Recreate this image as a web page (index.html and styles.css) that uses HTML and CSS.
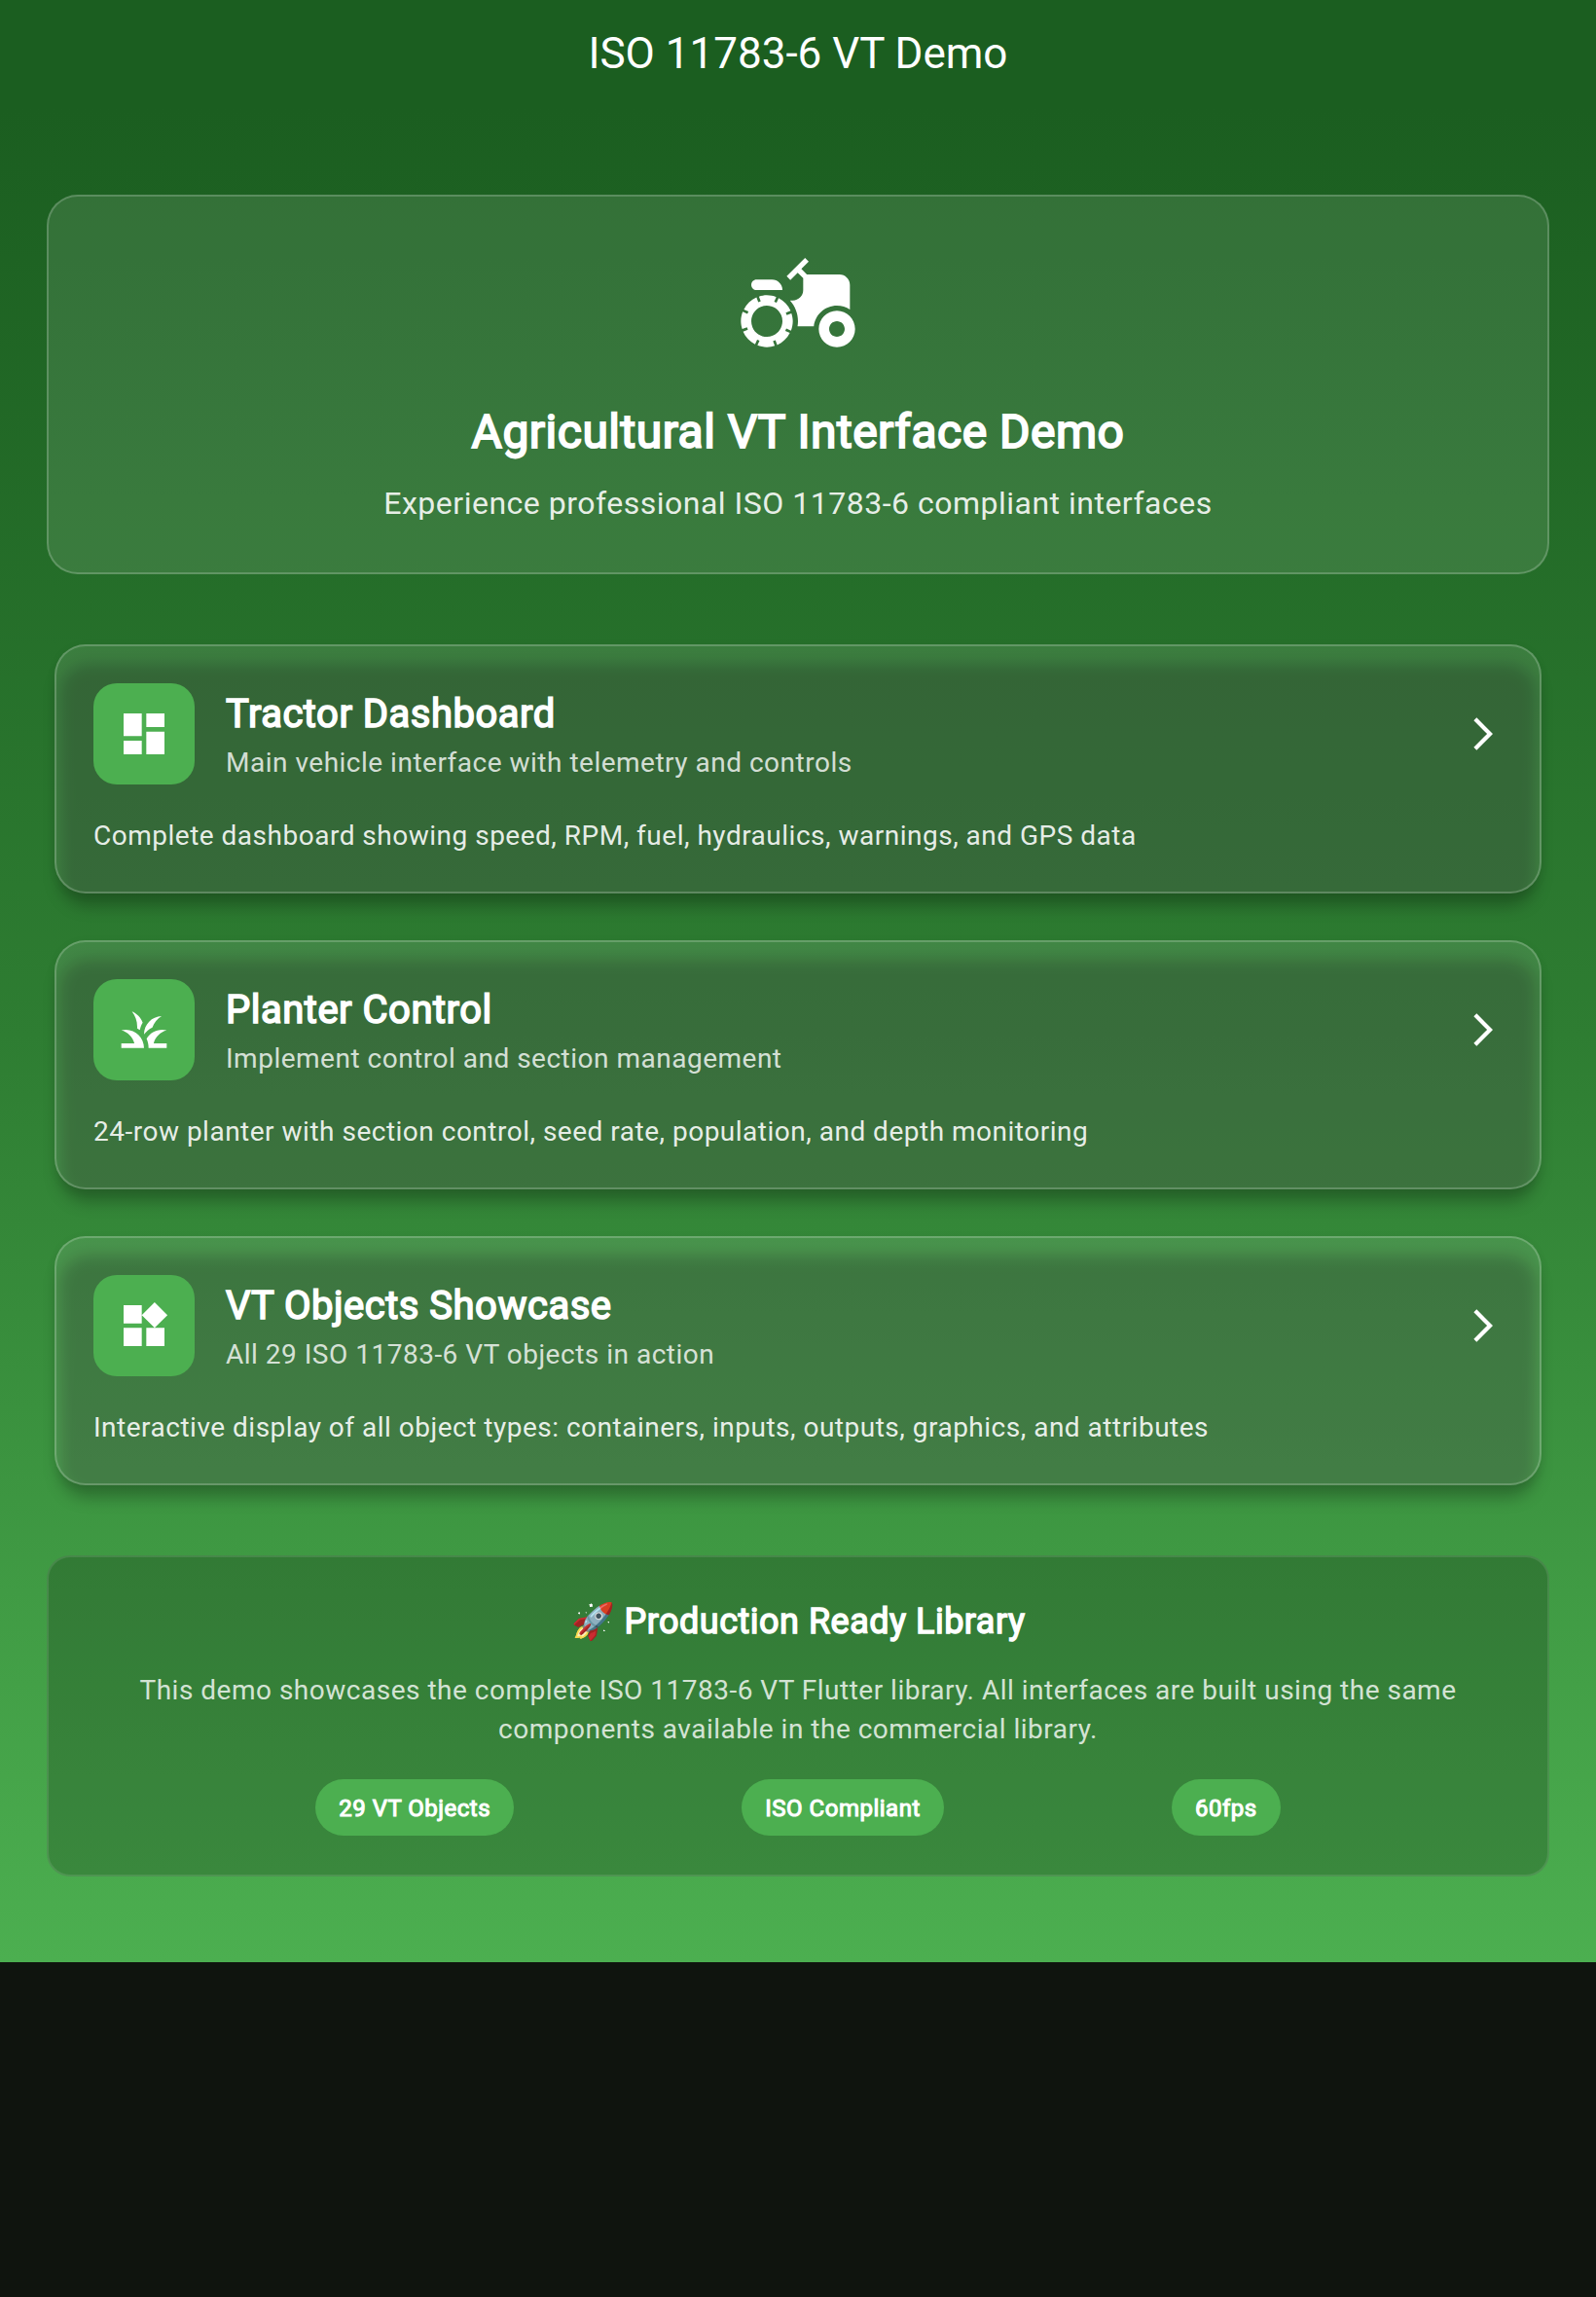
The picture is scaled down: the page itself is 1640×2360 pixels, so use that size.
FILE: index.html
```
<!DOCTYPE html>
<html lang="en">
<head>
<meta charset="utf-8">
<title>ISO 11783-6 VT Demo</title>
<link rel="stylesheet" href="styles.css">
</head>
<body>
<header class="app-bar"><h1 class="app-title">ISO 11783-6 VT Demo</h1></header>
<main class="content">
  <section class="hero">
    <svg class="hero-icon" viewBox="0 0 24 24" aria-hidden="true"><path d="M19.5,12c0.93,0,1.78,0.28,2.5,0.76V8c0-1.1-0.9-2-2-2h-6.29l-1.06-1.06l1.41-1.41l-0.71-0.71L9.82,6.35l0.71,0.71l1.41-1.41L13,6.71V9c0,1.1-0.9,2-2,2h-0.54c0.95,1.06,1.54,2.46,1.54,4c0,0.34-0.04,0.67-0.09,1h3.14C15.3,13.75,17.19,12,19.5,12z"/><path d="M19.5,13c-1.93,0-3.5,1.57-3.5,3.5s1.57,3.5,3.5,3.5s3.5-1.57,3.5-3.5S21.43,13,19.5,13z M19.5,18c-0.83,0-1.5-0.67-1.5-1.5s0.67-1.5,1.5-1.5s1.5,0.67,1.5,1.5S20.33,18,19.5,18z"/><path d="M4,9h5c0-1.1-0.9-2-2-2H4C3.45,7,3,7.45,3,8C3,8.55,3.45,9,4,9z"/><path d="M9.83,13.82l-0.18-0.47L10.58,13c-0.46-1.06-1.28-1.91-2.31-2.43l-0.4,0.89l-0.46-0.21l0.4-0.9C7.26,10.13,6.64,10,6,10c-0.53,0-1.04,0.11-1.52,0.26l0.34,0.91l-0.47,0.18L4,10.42c-1.06,0.46-1.91,1.28-2.43,2.31l0.89,0.4l-0.21,0.46l-0.9-0.4C1.13,13.74,1,14.36,1,15c0,0.53,0.11,1.04,0.26,1.52l0.91-0.34l0.18,0.47L1.42,17c0.46,1.06,1.28,1.91,2.31,2.43l0.4-0.89l0.46,0.21l-0.4,0.9C4.74,19.87,5.36,20,6,20c0.53,0,1.04-0.11,1.52-0.26l-0.34-0.91l0.47-0.18L8,19.58c1.06-0.46,1.91-1.28,2.43-2.31l-0.89-0.4l0.21-0.46l0.9,0.4C10.87,16.26,11,15.64,11,15c0-0.53-0.11-1.04-0.26-1.52L9.83,13.82z M7.15,17.77c-1.53,0.63-3.29-0.09-3.92-1.62c-0.63-1.53,0.09-3.29,1.62-3.92c1.53-0.63,3.29,0.09,3.92,1.62C9.41,15.38,8.68,17.14,7.15,17.77z"/></svg>
    <h2 class="hero-title">Agricultural VT Interface Demo</h2>
    <p class="hero-subtitle">Experience professional ISO 11783-6 compliant interfaces</p>
  </section>

  <section class="demos">
    <article class="card">
      <div class="card-head">
        <div class="tile"><svg viewBox="0 0 24 24" aria-hidden="true"><path d="M3 13h8V3H3v10zm0 8h8v-6H3v6zm10 0h8V11h-8v10zm0-18v6h8V3h-8z"/></svg></div>
        <div class="card-text"><h3 class="card-title">Tractor Dashboard</h3><p class="card-subtitle">Main vehicle interface with telemetry and controls</p></div>
        <svg class="chevron" viewBox="0 0 24 24" aria-hidden="true"><path d="M6.23 20.23 8 22l10-10L8 2 6.23 3.77 14.46 12z"/></svg>
      </div>
      <p class="card-desc">Complete dashboard showing speed, RPM, fuel, hydraulics, warnings, and GPS data</p>
    </article>
    <article class="card">
      <div class="card-head">
        <div class="tile"><svg viewBox="0 0 24 24" aria-hidden="true"><path d="M12 20H2v-2h5.75C7.02 15.19 4.81 12.99 2 12.26 2.64 12.1 3.31 12 4 12c4.42 0 8 3.58 8 8zM22 12.26C21.36 12.1 20.69 12 20 12c-2.93 0-5.48 1.58-6.88 3.93.29.66.53 1.35.67 2.07.13.65.2 1.32.2 2h8v-2h-5.75c.74-2.81 2.95-5.01 5.76-5.74zM15.64 11.02c.78-2.09 2.23-3.84 4.09-5C15.44 6.16 12 9.67 12 14v.02c.95-1.27 2.2-2.3 3.64-3zM11.42 8.85C10.58 6.66 8.88 4.89 6.7 4 8.14 5.86 9 8.18 9 10.71c0 .21-.03.41-.04.61.43.24.83.52 1.22.82.15-1.18.59-2.3 1.24-3.29z"/></svg></div>
        <div class="card-text"><h3 class="card-title">Planter Control</h3><p class="card-subtitle">Implement control and section management</p></div>
        <svg class="chevron" viewBox="0 0 24 24" aria-hidden="true"><path d="M6.23 20.23 8 22l10-10L8 2 6.23 3.77 14.46 12z"/></svg>
      </div>
      <p class="card-desc">24-row planter with section control, seed rate, population, and depth monitoring</p>
    </article>
    <article class="card">
      <div class="card-head">
        <div class="tile"><svg viewBox="0 0 24 24" aria-hidden="true"><path d="M13 13v8h8v-8h-8zM3 21h8v-8H3v8zM3 3v8h8V3H3zm13.66-1.31L11 7.34 16.66 13l5.66-5.66-5.66-5.65z"/></svg></div>
        <div class="card-text"><h3 class="card-title">VT Objects Showcase</h3><p class="card-subtitle">All 29 ISO 11783-6 VT objects in action</p></div>
        <svg class="chevron" viewBox="0 0 24 24" aria-hidden="true"><path d="M6.23 20.23 8 22l10-10L8 2 6.23 3.77 14.46 12z"/></svg>
      </div>
      <p class="card-desc">Interactive display of all object types: containers, inputs, outputs, graphics, and attributes</p>
    </article>
  </section>

  <section class="footer-panel">
    <h2 class="footer-title">🚀 Production Ready Library</h2>
    <p class="footer-text">This demo showcases the complete ISO 11783-6 VT Flutter library. All interfaces are built using the same components available in the commercial library.</p>
    <div class="chips"><span class="chip">29 VT Objects</span><span class="chip">ISO Compliant</span><span class="chip">60fps</span></div>
  </section>
</main>
</body>
</html>
```
FILE: styles.css
```
* { box-sizing: border-box; margin: 0; }

body {
  min-height: 2360px;
  background: #0f140e;
  color: #fff;
  font-family: Roboto, "Noto Sans", sans-serif;
  font-weight: 400;
}

h1, h2, h3 { font-weight: 400; }
svg { display: block; flex-shrink: 0; fill: #fff; }

.app-bar {
  height: 112px;
  display: flex;
  justify-content: center;
  background: #1b5e20;
}
.app-title { padding-top: 29px; font-size: 44px; line-height: 52px; }

.content {
  height: 1904px;
  padding: 88px 48px 0;
  background: linear-gradient(#1b5e20, #2e7d32 50%, #4caf50);
}

.hero {
  height: 390px;
  padding: 48px 48px 0;
  display: flex;
  flex-direction: column;
  align-items: center;
  border: 2px solid rgba(255, 255, 255, .2);
  border-radius: 32px;
  background: rgba(255, 255, 255, .1);
}
.hero-icon { width: 128px; height: 128px; }
.hero-title {
  margin-top: 34px;
  font-size: 48px;
  line-height: 64px;
  letter-spacing: .5px;
  -webkit-text-stroke: .04em #fff;
}
.hero-subtitle {
  margin-top: 17px;
  font-size: 32px;
  line-height: 48px;
  letter-spacing: .5px;
  color: rgba(255, 255, 255, .9);
}

.demos {
  isolation: isolate;
  display: flex;
  flex-direction: column;
  gap: 48px;
  padding: 72px 8px 0;
}
.card {
  position: relative;
  height: 256px;
  padding: 38px;
  border: 2px solid rgba(255, 255, 255, .2);
  border-radius: 32px;
  background: rgba(255, 255, 255, .1);
  box-shadow: 0 2px 10px rgba(0, 0, 0, .06);
}
/* Elevation shadow that shows through the translucent card */
.card::before {
  content: "";
  position: absolute;
  z-index: -1;
  inset: 18px 3px -15px;
  border-radius: 30px;
  background: rgba(0, 0, 0, .25);
  filter: blur(8px);
}
.card-head { display: flex; align-items: center; }
.tile { padding: 24px; border-radius: 24px; background: #4caf50; }
.tile svg { width: 56px; height: 56px; }
.card-text { flex: 1; height: 96px; margin-left: 32px; }
.card-title {
  font-size: 40px;
  line-height: 56px;
  letter-spacing: .5px;
  -webkit-text-stroke: .04em #fff;
}
.card-subtitle {
  margin-top: 2px;
  font-size: 28px;
  line-height: 40px;
  letter-spacing: .5px;
  color: rgba(255, 255, 255, .8);
}
.chevron { width: 40px; height: 40px; }
.card-desc {
  margin-top: 33px;
  font-size: 28px;
  line-height: 40px;
  letter-spacing: .5px;
  color: rgba(255, 255, 255, .9);
}

.footer-panel {
  height: 330px;
  margin-top: 72px;
  padding: 38px;
  text-align: center;
  border: 2px solid rgba(255, 255, 255, .1);
  border-radius: 24px;
  background: rgba(0, 0, 0, .2);
}
.footer-title {
  font-size: 36px;
  line-height: 56px;
  letter-spacing: .5px;
  -webkit-text-stroke: .04em #fff;
}
.footer-text {
  margin-top: 23px;
  padding: 0 40px;
  font-size: 28px;
  line-height: 40px;
  letter-spacing: .5px;
  color: rgba(255, 255, 255, .8);
}
.chips { display: flex; justify-content: space-evenly; margin-top: 31px; padding: 0 2px; }
.chip {
  height: 58px;
  padding: 0 24px;
  border-radius: 29px;
  background: #4caf50;
  font-size: 24px;
  line-height: 60px;
  letter-spacing: .5px;
  -webkit-text-stroke: .045em #fff;
}
```
